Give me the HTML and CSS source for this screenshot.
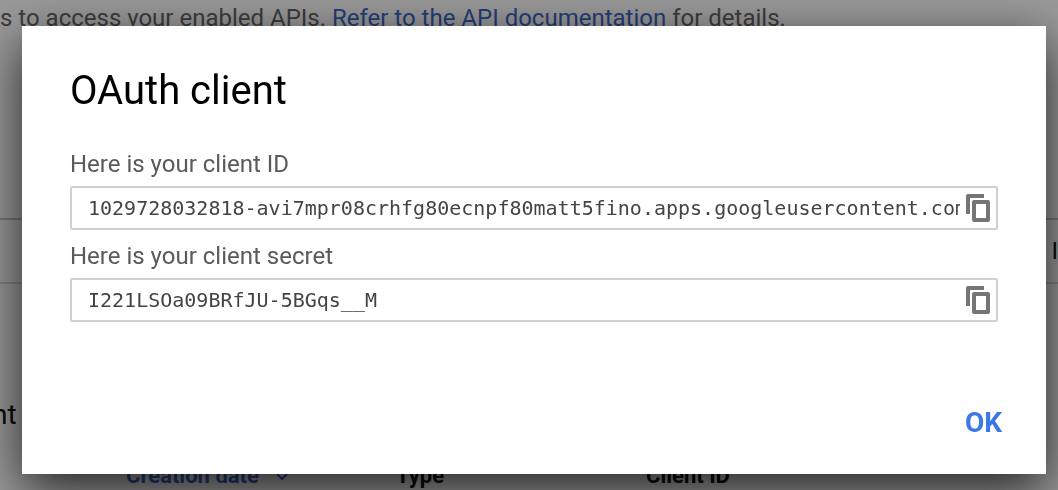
FILE: index.html
```html
<!DOCTYPE html>
<html lang="en">
<head>
<meta charset="utf-8">
<title>OAuth client</title>
<link rel="stylesheet" href="styles.css">
</head>
<body>
<main class="page">
  <p class="intro">s to access your enabled APIs. <a href="#docs">Refer to the API documentation</a> for details.</p>
  <div class="banner">I</div>
  <h2 class="section-title">nt</h2>
  <table class="clients">
    <thead>
      <tr>
        <th class="col-date" scope="col">Creation date
          <svg class="chevron" viewBox="0 0 12 8" aria-hidden="true"><path d="M1 1l5 5 5-5" fill="none" stroke="currentColor" stroke-width="2"/></svg>
        </th>
        <th class="col-type" scope="col">Type</th>
        <th scope="col">Client ID</th>
      </tr>
    </thead>
  </table>
</main>
<div class="overlay">
  <section class="dialog" role="dialog" aria-modal="true" aria-labelledby="dialog-title">
    <h1 class="dialog-title" id="dialog-title">OAuth client</h1>
    <div class="dialog-body">
      <label class="label" for="client-id">Here is your client ID</label>
      <div class="field">
        <input class="field-input" id="client-id" type="text" readonly value="1029728032818-avi7mpr08crhfg80ecnpf80matt5fino.apps.googleusercontent.com">
        <button class="copy" type="button" aria-label="Copy client ID">
          <svg class="copy-icon" viewBox="0 0 24 28" aria-hidden="true"><path fill-rule="evenodd" d="M2 0H18V4H4V20H0V2Q0 0 2 0ZM8 6H22Q24 6 24 8V26Q24 28 22 28H8Q6 28 6 26V8Q6 6 8 6ZM10 10V24H20V10Z"/></svg>
        </button>
      </div>
      <label class="label" for="client-secret">Here is your client secret</label>
      <div class="field">
        <input class="field-input" id="client-secret" type="text" readonly value="I221LSOa09BRfJU-5BGqs__M">
        <button class="copy" type="button" aria-label="Copy client secret">
          <svg class="copy-icon" viewBox="0 0 24 28" aria-hidden="true"><path fill-rule="evenodd" d="M2 0H18V4H4V20H0V2Q0 0 2 0ZM8 6H22Q24 6 24 8V26Q24 28 22 28H8Q6 28 6 26V8Q6 6 8 6ZM10 10V24H20V10Z"/></svg>
        </button>
      </div>
    </div>
    <div class="actions">
      <button class="ok" type="button">OK</button>
    </div>
  </section>
</div>
</body>
</html>
```
FILE: styles.css
```css
* {
  box-sizing: border-box;
}

body {
  margin: 0;
  overflow: hidden;
  background: #fff;
  font-family: Roboto, "Liberation Sans", sans-serif;
}

.page {
  height: 100vh;
  overflow: hidden;
  color: #111;
}

.intro {
  margin: 0;
  padding-top: 4px;
  font-size: 24px;
  line-height: 28px;
  color: #666;
  white-space: nowrap;
}

.intro a {
  color: #3c68c8;
  text-decoration: none;
}

.banner {
  display: flex;
  align-items: center;
  justify-content: flex-end;
  height: 66px;
  margin-top: 186px;
  border-top: 2px solid #c8c8c8;
  border-bottom: 2px solid #d8d8d8;
  font-size: 24px;
}

.section-title {
  margin: 115px 0 0;
  font-size: 28px;
  font-weight: 400;
  line-height: 32px;
  text-indent: -8px;
}

.clients {
  width: 100%;
  margin-top: 31px;
  border-spacing: 0;
  table-layout: fixed;
}

.clients th {
  padding: 0;
  font-size: 22px;
  font-weight: 700;
  line-height: 28px;
  text-align: left;
}

.clients .col-date {
  width: 396px;
  padding-left: 126px;
  color: #3c68c8;
}

.clients .col-type {
  width: 250px;
}

.chevron {
  width: 12px;
  height: 8px;
  margin-left: 12px;
  vertical-align: middle;
}

.overlay {
  position: fixed;
  inset: 0;
  padding: 26px 12px 16px 22px;
  background: rgba(0, 0, 0, 0.4);
}

.dialog {
  padding-top: 41px;
  background: #fff;
  box-shadow: 0 16px 48px rgba(0, 0, 0, 0.76);
}

.dialog-title {
  margin: 0 48px 35px;
  font-size: 40px;
  font-weight: 400;
  line-height: 48px;
  color: #000;
}

.dialog-body {
  display: flex;
  flex-direction: column;
  padding: 0 48px;
}

.label {
  margin-bottom: 8px;
  font-size: 24px;
  line-height: 28px;
  color: #5a5a5a;
}

.field {
  display: flex;
  align-items: center;
  height: 44px;
  padding: 0 6px 0 16px;
  border: 2px solid #d0d0d0;
  border-radius: 2px;
}

.field + .label {
  margin-top: 12px;
}

.field-input {
  flex: 1;
  min-width: 0;
  margin-right: 6px;
  padding: 0;
  border: 0;
  outline: 0;
  background: none;
  font-family: "DejaVu Sans Mono", "Liberation Mono", monospace;
  font-size: 20px;
  line-height: 28px;
  color: #444;
}

.copy {
  display: flex;
  padding: 0;
  border: 0;
  background: none;
  color: #757575;
}

.copy-icon {
  width: 24px;
  height: 28px;
  fill: currentColor;
}

.actions {
  display: flex;
  justify-content: flex-end;
  padding: 85px 44px 35px;
}

.ok {
  padding: 0;
  border: 0;
  background: none;
  font-family: inherit;
  font-size: 28px;
  font-weight: 700;
  line-height: 32px;
  color: #3b78e7;
}
```
